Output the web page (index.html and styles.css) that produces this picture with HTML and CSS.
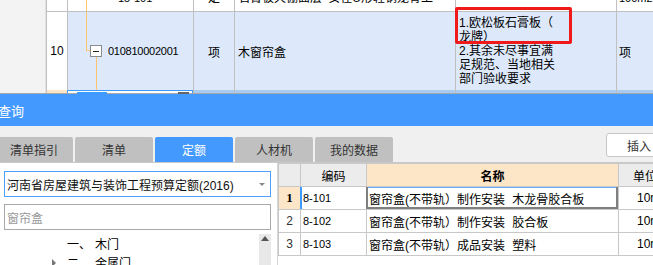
FILE: index.html
```html
<!DOCTYPE html>
<html lang="zh-CN">
<head>
<meta charset="utf-8">
<title>查询</title>
<link rel="stylesheet" href="styles.css">
</head>
<body>
<div class="sheet">
  <div class="gutter"></div>
  <div class="grid">
    <div class="row prev">
      <div class="c num"></div>
      <div class="c code"><span class="vline-full"></span><span class="t code-prev">15-101</span></div>
      <div class="c type"><span class="t">定</span></div>
      <div class="c name"><span class="t">石膏板天棚面层 安在U形轻钢龙骨上</span></div>
      <div class="c desc"></div>
      <div class="c unit"><span class="t">100m2</span></div>
    </div>
    <div class="row cur">
      <div class="c num">10</div>
      <div class="c code">
        <span class="tree-up"></span><span class="tree-h"></span><span class="tree-down"></span>
        <span class="toggle"><span class="minus"></span></span>
        <span class="codetext">010810002001</span>
      </div>
      <div class="c type">项</div>
      <div class="c name">木窗帘盒</div>
      <div class="c desc"><p class="desc-text">1.欧松板石膏板（<br>龙牌）<br>2.其余未尽事宜满<br>足规范、当地相关<br>部门验收要求</p></div>
      <div class="c unit">项</div>
      <div class="mark"></div>
    </div>
    <div class="row next">
      <div class="c num"></div>
      <div class="c code edit"><span class="chip"></span><span class="chip dark"></span></div>
      <div class="c type"></div>
      <div class="c name"></div>
      <div class="c desc"></div>
      <div class="c unit"></div>
    </div>
  </div>
</div>

<div class="dock">
  <div class="titlebar"><span class="title">查询</span></div>
  <div class="tabbar">
    <div class="tabs">
      <div class="tab">清单指引</div>
      <div class="tab">清单</div>
      <div class="tab active">定额</div>
      <div class="tab">人材机</div>
      <div class="tab">我的数据</div>
    </div>
    <div class="btn">插入</div>
  </div>
  <div class="panes">
    <div class="left">
      <div class="select"><span class="select-text">河南省房屋建筑与装饰工程预算定额(2016)</span><span class="caret"></span></div>
      <div class="search"><span class="placeholder">窗帘盒</span></div>
      <div class="tree">
        <div class="tree-items">
          <div class="titem"><span class="arrow"></span><span class="idx">一、</span><span class="lbl">木门</span></div>
          <div class="titem"><span class="arrow closed"></span><span class="idx">二、</span><span class="lbl">金属门</span></div>
        </div>
        <div class="scrollbar"><span class="up"></span></div>
      </div>
    </div>
    <div class="right">
      <div class="trow thead">
        <div class="tc rn"></div>
        <div class="tc tcode center">编码</div>
        <div class="tc tname center hl">名称</div>
        <div class="tc tunit center">单位</div>
        <div class="tc"></div>
      </div>
      <div class="trow">
        <div class="tc rn cur-rn">1</div>
        <div class="tc tcode cur-code">8-101</div>
        <div class="tc tname sel">窗帘盒(不带轨）制作安装 木龙骨胶合板</div>
        <div class="tc tunit">10m</div>
        <div class="tc"></div>
      </div>
      <div class="trow">
        <div class="tc rn">2</div>
        <div class="tc tcode">8-102</div>
        <div class="tc tname">窗帘盒(不带轨）制作安装 胶合板</div>
        <div class="tc tunit">10m</div>
        <div class="tc"></div>
      </div>
      <div class="trow">
        <div class="tc rn">3</div>
        <div class="tc tcode">8-103</div>
        <div class="tc tname">窗帘盒(不带轨）成品安装 塑料</div>
        <div class="tc tunit">10m</div>
        <div class="tc"></div>
      </div>
    </div>
  </div>
</div>
</body>
</html>
```

FILE: styles.css
```css
* { box-sizing: border-box; margin: 0; padding: 0; }
html, body { width: 653px; height: 265px; overflow: hidden; background: #fff; }
body {
  font-family: "Liberation Sans", "Noto Sans CJK SC", sans-serif;
  font-size: 12px;
  color: #000;
}

/* ---------- top sheet ---------- */
.sheet { display: flex; height: 94px; border-bottom: 1px solid #a9a9a9; }
.gutter { width: 46px; flex: none; background: #f3f3f3; border-right: 1px solid #e2e2e2; }
.grid { flex: 1; min-width: 0; display: flex; flex-direction: column; }
.row {
  display: grid;
  grid-template-columns: 21px 126px 41px 221px 161px 1fr;
  flex: none;
  position: relative;
}
.c {
  border-left: 1px solid #c0c0c0;
  position: relative;
  overflow: hidden;
  display: flex;
  align-items: center;
  min-width: 0;
  white-space: nowrap;
}
.prev { height: 12px; border-bottom: 1px solid #c0c0c0; }
.prev .c { align-items: flex-start; }
.prev .t { line-height: 14px; margin-top: -9px; }
.prev .code-prev { padding-left: 50px; font-size: 11px; }
.prev .type { justify-content: center; }
.prev .name { padding-left: 3px; word-spacing: 3px; }
.prev .unit { padding-left: 2px; font-size: 11px; }
.vline-full { position: absolute; left: 18px; top: 0; bottom: 0; width: 1px; background: #ffc46e; }

.cur { height: 78px; }
.cur .c { background: #dde9fb; }
.cur .c.num { background: #fff; justify-content: center; }
.cur .code { padding-left: 22px; }
.tree-up { position: absolute; left: 18px; top: 0; height: 39px; width: 1px; background: #ffc46e; }
.tree-h { position: absolute; left: 18px; top: 38px; width: 4px; height: 1px; background: #ffc46e; }
.tree-down { position: absolute; left: 28px; top: 45px; bottom: 0; width: 1px; background: #ffc46e; }
.toggle {
  width: 12px; height: 12px; flex: none;
  border: 1px solid #8a8a8a; background: #fff;
  display: flex; align-items: center; justify-content: center;
  position: relative;
}
.minus { width: 6px; height: 1px; background: #222; }
.codetext { margin-left: 6px; font-size: 11px; letter-spacing: -0.25px; }
.cur .type { justify-content: center; }
.cur .name { padding-left: 3px; }
.cur .desc { padding-left: 3px; }
.desc-text { line-height: 14px; }
.cur .unit { padding-left: 2px; }
.mark {
  position: absolute;
  left: 409px; top: -5px;
  width: 117px; height: 37px;
  border: 3px solid #f01a1a;
  border-radius: 2px;
}

.next { height: 3px; }
.next .c { background: #a9cbef; }
.next .c.num { background: #fde6c8; }
.next .code.edit { background: #fff; border: 1px solid #3c9bff; border-bottom: 0; overflow: visible; }
.chip { position: absolute; left: 9px; top: 1px; width: 30px; height: 2px; background: #3c9bff; }
.chip.dark { left: 110px; width: 11px; background: #666; }

/* ---------- dock ---------- */
.titlebar { height: 32px; background: #4499ff; display: flex; align-items: center; }
.title { color: #fff; font-size: 13px; margin-left: -2px; }

.tabbar {
  height: 37px;
  background: #f0f0f0;
  border-bottom: 1px solid #c9c9c9;
  display: flex;
  align-items: flex-end;
}
.tabs { display: flex; gap: 2px; margin-left: -5px; }
.tab {
  width: 78px; height: 25px;
  background: #c0c0c0;
  border-radius: 2px 2px 0 0;
  color: #333;
  font-size: 12px;
  display: flex; align-items: center; justify-content: center;
}
.tab.active { background: #4499ff; color: #fff; }
.btn {
  align-self: flex-start;
  margin-top: 7px;
  margin-left: auto;
  margin-right: -30px;
  width: 77px; height: 24px;
  background: #fff;
  border: 1px solid #c6c6c6;
  border-radius: 3px;
  padding-left: 20px;
  display: flex; align-items: center;
  color: #333;
}

.panes { display: flex; height: 102px; }
.left { width: 277px; flex: none; padding: 8px 6px 0 4px; }
.select {
  height: 26px;
  border: 1px solid #4f9ef8;
  display: flex; align-items: center;
  padding-left: 2px;
  position: relative;
}
.select-text { color: #111; }
.caret {
  position: absolute; right: 5px; top: 11px;
  width: 0; height: 0;
  border-left: 3px solid transparent;
  border-right: 3px solid transparent;
  border-top: 3px solid #888;
}
.search {
  height: 26px; margin-top: 7px;
  border: 1px solid #a9a9a9;
  display: flex; align-items: center;
  padding-left: 2px;
}
.placeholder { color: #9a9a9a; }
.tree { display: flex; margin-top: 4px; height: 40px; }
.tree-items { flex: 1; padding-left: 46px; }
.titem { height: 19px; display: flex; align-items: center; }
.arrow { width: 17px; flex: none; display: flex; }
.arrow.closed::before {
  content: "";
  margin-left: 2px;
  border-top: 4px solid transparent;
  border-bottom: 4px solid transparent;
  border-left: 4px solid #777;
}
.idx { width: 28px; flex: none; }
.scrollbar { width: 12px; flex: none; background: #e8e8e8; display: flex; justify-content: center; padding-top: 2px; }
.up {
  width: 0; height: 0;
  border-left: 4px solid transparent;
  border-right: 4px solid transparent;
  border-bottom: 5px solid #555;
}

.right { flex: 1; min-width: 0; border-left: 1px solid #d6d6d6; }
.trow {
  display: grid;
  grid-template-columns: 22px 66px 252px 50px 1fr;
  height: 23px;
  border-bottom: 1px solid #c8c8c8;
}
.thead { height: 24px; border-top: 1px solid #c8c8c8; }
.tc {
  border-left: 1px solid #c8c8c8;
  display: flex; align-items: center;
  white-space: nowrap; overflow: hidden;
  min-width: 0;
  padding-left: 2px;
}
.thead .tc { background: #ececec; }
.thead .tc.hl { background: #fde6c8; font-weight: bold; }
.center { justify-content: center; padding-left: 0; }
.rn { justify-content: center; padding-left: 0; color: #333; }
.cur-rn { background: #fde6c8; font-family: "Liberation Serif", serif; font-weight: bold; font-size: 13px; color: #000; }
.tcode { font-size: 11px; }
.thead .tcode { font-size: 12px; }
.cur-code { border-left: 2px solid #3c9bff; padding-left: 1px; }
.tname { word-spacing: 4px; }
.sel {
  border-left-color: #7f7f7f;
  box-shadow: inset 1px 0 0 #7f7f7f, inset -2px 0 0 #7f7f7f, inset 0 -2px 0 #7f7f7f, inset 0 1px 0 #6aaef3;
}
.tunit { padding-left: 18px; }
.thead .tunit { padding-left: 14px; justify-content: flex-start; }
```
